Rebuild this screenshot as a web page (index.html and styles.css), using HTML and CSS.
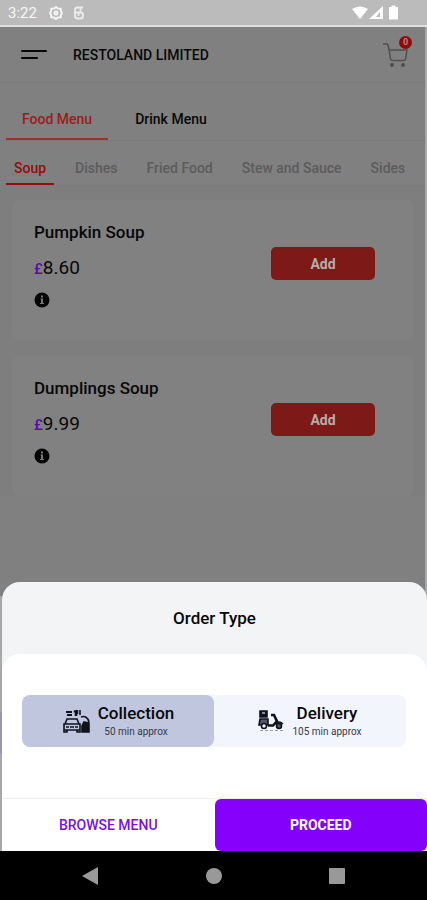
FILE: index.html
```html
<!DOCTYPE html>
<html lang="en">
<head>
<meta charset="utf-8">
<meta name="viewport" content="width=device-width, initial-scale=1">
<title>Restoland Limited</title>
<link rel="stylesheet" href="styles.css">
</head>
<body>
<div class="status">
  <span class="time">3:22</span>
  <svg class="status-icon" width="14" height="14" viewBox="0 0 14 14" fill="none" stroke="#f4f4f4" stroke-width="2"><path d="M7 1l2 1.600 2.700.2.300 2.700L13 7l-1 1.700-.3 2.600-2.700.1L7 13l-2-1.600-2.700-.1L2 8.700 1 7l1-1.500.3-2.700L5 2.600z"/><circle cx="7" cy="7" r="1.500"/></svg>
  <svg class="status-icon" width="12" height="14" viewBox="0 0 12 14" fill="none" stroke="#ececec" stroke-width="1.800"><path d="M10 1.500H4.500Q2 1.500 2 4v5.500Q2 12.500 5 12.500h2.500Q10 12.500 10 10V8.500Q10 6.500 8 6.500H2M7.500 1.500v5M5.500 6.500v3.500"/></svg>
  <svg class="signals" width="48" height="16" viewBox="0 0 48 16" fill="#fff"><path d="M0 4Q8-1 16 4L8 14z"/><path d="M17 14L31 1v13z"/><path d="M24 12l4-5v5z" fill="#bbb"/><path d="M37 2h2.500V.5h4V2H46v12.500h-9z"/></svg>
</div>
<div class="stage">
  <main class="screen">
    <header class="header">
      <button class="plain" aria-label="Open navigation"><svg width="27" height="12" viewBox="0 0 27 12" stroke="#080808" stroke-width="2" stroke-linecap="round"><path d="M2 2h24M2 9h15"/></svg></button>
      <h1 class="brand">RESTOLAND LIMITED</h1>
      <button class="plain cart" aria-label="Cart">
        <svg width="27" height="26" viewBox="0 0 27 26" fill="none" stroke="#505050" stroke-width="1.500"><path d="M1 2h4.500l1.500 5 1.500 10q.5 1.500 2 1.500h11q1.500 0 2-1.500L25 8H7"/><circle cx="10" cy="23" r="1.200" fill="#484848"/><circle cx="21" cy="23" r="1.200" fill="#484848"/></svg>
        <span class="badge">0</span>
      </button>
    </header>
    <nav class="menus">
      <a class="menu menu-on" href="#food">Food Menu</a>
      <a class="menu" href="#drink">Drink Menu</a>
    </nav>
    <nav class="groups">
      <a class="group group-on" href="#soup">Soup</a>
      <a class="group" href="#dishes">Dishes</a>
      <a class="group" href="#fried">Fried Food</a>
      <a class="group" href="#stew">Stew and Sauce</a>
      <a class="group" href="#sides">Sides</a>
    </nav>
    <section class="items">
      <article class="card">
        <div class="info">
          <h2 class="name">Pumpkin Soup</h2>
          <p class="price"><span class="currency">£</span>8.60</p>
          <button class="plain" aria-label="About Pumpkin Soup"><svg width="16" height="16" viewBox="0 0 16 16"><circle cx="8" cy="8" r="7.500" fill="#050505"/><path d="M7 3.500h2v2H7zM6.500 6.500H9v4.500h1v1H6v-1h1V7.500h-.5z" fill="#777"/></svg></button>
        </div>
        <button class="add">Add</button>
      </article>
      <article class="card">
        <div class="info">
          <h2 class="name">Dumplings Soup</h2>
          <p class="price"><span class="currency">£</span>9.99</p>
          <button class="plain" aria-label="About Dumplings Soup"><svg width="16" height="16" viewBox="0 0 16 16"><circle cx="8" cy="8" r="7.500" fill="#050505"/><path d="M7 3.500h2v2H7zM6.500 6.500H9v4.500h1v1H6v-1h1V7.500h-.5z" fill="#777"/></svg></button>
        </div>
        <button class="add">Add</button>
      </article>
    </section>
  </main>
  <section class="sheet">
    <h2 class="sheet-title">Order Type</h2>
    <div class="sheet-body">
      <div class="types">
        <button class="type type-on">
          <svg width="28" height="26" viewBox="0 0 28 26" fill="none" stroke="#10121c" stroke-width="1.600"><path d="M4 4h6M5 7h5" stroke-width="2"/><path d="M12 3l2 1v4M15 2v4" stroke-width="2.500"/><path d="M18 2v5M3 16l2-5h10l2 5M2 22v-6h16v6zM2 22v2h3v-2M15 22v2h3v-2M4 19h3M8 19h4M13 19h3M19 9q6-2 8 5"/><path d="M22 14l5 1v9h-7v-6z" fill="#10121c"/></svg>
          <span class="type-text"><span class="type-name">Collection</span><span class="type-time">50 min approx</span></span>
        </button>
        <button class="type">
          <svg width="26" height="24" viewBox="0 0 26 24" fill="none" stroke="#10121c" stroke-width="1.600"><path d="M2 2h7v6H2z" fill="#10121c"/><path d="M4 4h3" stroke="#aab"/><path d="M2 10h8v6H1z" fill="#555967"/><circle cx="6" cy="17" r="2.500" fill="#f3f5fd"/><path d="M10 16.500h5l4-4.500-3-6h-3M16 6l4 9" stroke-width="2.500"/><path d="M17 15q4-4 8 0"/><circle cx="21" cy="17" r="2.500" fill="#555967"/><path d="M2 21.500h24" stroke="#999da9" stroke-width="1" stroke-dasharray="3 2"/></svg>
          <span class="type-text"><span class="type-name">Delivery</span><span class="type-time">105 min approx</span></span>
        </button>
      </div>
    </div>
    <div class="actions">
      <button class="action">BROWSE MENU</button>
      <button class="action action-main">PROCEED</button>
    </div>
  </section>
</div>
<nav class="system">
  <button class="plain" aria-label="Back"><svg width="18" height="20" viewBox="0 0 18 20"><path d="M17 1v18L1 10z" fill="#999"/></svg></button>
  <button class="plain" aria-label="Home"><svg width="16" height="16" viewBox="0 0 16 16"><circle cx="8" cy="8" r="8" fill="#999"/></svg></button>
  <button class="plain" aria-label="Recent apps"><svg width="16" height="16" viewBox="0 0 16 16"><rect width="16" height="16" rx="1" fill="#999"/></svg></button>
</nav>
</body>
</html>
```
FILE: styles.css
```css
* { box-sizing: border-box; }
body {
  margin: 0;
  min-height: 100vh;
  display: flex;
  flex-direction: column;
  background: #808080;
  color: #080808;
  font-family: Roboto, "Liberation Sans", sans-serif;
}
h1, h2, p { margin: 0; font-weight: 500; }
a { color: inherit; text-decoration: none; }
button {
  font: inherit;
  color: inherit;
  border: 0;
  padding: 0;
  background: none;
}
svg { display: block; flex: none; }
.plain { display: block; flex: none; }

.status {
  height: 27px;
  display: flex;
  align-items: center;
  padding: 0 27px 0 8px;
  background: #bbb;
  border-bottom: 2px solid #e0e0e0;
}
.time { font-size: 15px; color: #f6f6f6; margin-right: 12px; }
.status-icon { margin-right: 10px; }
.signals { margin-left: auto; }

.stage {
  flex: 1;
  display: flex;
  flex-direction: column;
  position: relative;
}
.screen {
  flex: 1;
  background: #808080;
  border-right: 2px solid #a8a8a8;
}
.header {
  height: 56px;
  display: flex;
  align-items: center;
  padding: 0 16px 0 20px;
  border-bottom: 1px solid #7b7b7b;
}
.brand { flex: 1; margin-left: 26px; font-size: 14px; }
.cart { position: relative; }
.badge {
  position: absolute;
  top: -6px;
  right: -3px;
  width: 13px;
  height: 13px;
  border-radius: 50%;
  background: #8c0c0c;
  color: #c08080;
  font-size: 9px;
  font-weight: 700;
  line-height: 13px;
  text-align: center;
}

.menus {
  display: flex;
  height: 58px;
  padding-left: 6px;
  align-items: flex-end;
  border-bottom: 1px solid #7a7a7a;
}
.menu {
  height: 43px;
  padding: 0 16px;
  font-size: 14px;
  font-weight: 500;
  line-height: 44px;
  border-bottom: 2px solid transparent;
}
.menu + .menu { margin-left: 11px; }
.menu-on { color: #9c1c1c; border-color: #9c3030; }

.groups {
  display: flex;
  height: 45px;
  padding-left: 6px;
  font-size: 14px;
  font-weight: 500;
  color: #5c5c5c;
  border-bottom: 1px solid #7c7c7c;
  overflow: hidden;
}
.group {
  padding: 0 8px;
  margin-right: 13px;
  line-height: 54px;
  white-space: nowrap;
}
.group-on { color: #980c0c; border-bottom: 2px solid #980c0c; }

.items {
  display: grid;
  gap: 16px;
  padding: 14px 11px 0 12px;
  background: #7e7e7e;
  height: calc(100% - 159px);
  align-content: start;
}
.card {
  min-height: 140px;
  display: flex;
  justify-content: space-between;
  padding: 22px 39px 0 22px;
  background: #818181;
  border-radius: 8px;
}
.name { font-size: 17px; line-height: 20px; }
.price {
  margin: 14px 0 11px;
  font-size: 19px;
  line-height: 24px;
  font-weight: 400;
}
.currency { font-size: 15px; font-weight: 500; color: #5410a0; }
.add {
  width: 104px;
  height: 33px;
  margin-top: 25px;
  border-radius: 5px;
  background: #7d1a17;
  color: #b5adac;
  font-size: 14px;
  font-weight: 700;
}

.sheet {
  position: absolute;
  left: 2px;
  right: 0;
  bottom: 0;
  background: #f2f4f6;
  border-radius: 18px 18px 0 0;
}
/* Edge of the page behind, seen beside the sheet */
.sheet::before {
  content: "";
  position: absolute;
  left: -2px;
  top: 14px;
  bottom: 0;
  width: 2px;
  background: linear-gradient(#a8a8a8 0 116px, #9c94b4 116px 158px, #a8a8a8 158px);
}
.sheet-title {
  font-size: 17px;
  line-height: 72px;
  text-align: center;
}
.sheet-body {
  padding: 41px 21px 51px 20px;
  background: #fff;
  border-radius: 18px 18px 0 0;
}
.types {
  display: flex;
  border-radius: 8px;
  background: #f3f5fd;
}
.type {
  flex: 1;
  height: 52px;
  display: flex;
  align-items: center;
  justify-content: center;
  gap: 8px;
  border-radius: 8px;
}
.type-on { background: #bfc6de; }
.type-text { display: flex; flex-direction: column; align-items: center; }
.type-name { font-size: 17px; line-height: 22px; font-weight: 500; }
.type-time { font-size: 10px; line-height: 16px; color: #383a44; }
.actions {
  display: flex;
  background: #fff;
  border-top: 1px solid #eee;
}
.action {
  flex: 1;
  height: 52px;
  color: #7a10e0;
  font-size: 14px;
  font-weight: 500;
}
.action-main { background: #8500fa; color: #fff; border-radius: 6px; font-weight: 700; }

.system {
  height: 49px;
  display: flex;
  align-items: center;
  justify-content: space-between;
  padding: 0 82px 0 81px;
  background: #000;
}
```
